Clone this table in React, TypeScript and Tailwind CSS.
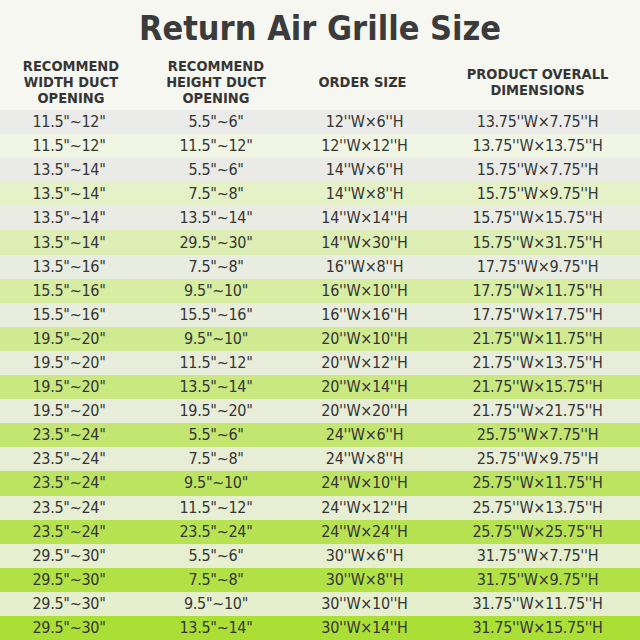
const rows: [string, string, string, string][] = [
  ['11.5"~12"', '5.5"~6"', "12''W×6''H", "13.75''W×7.75''H"],
  ['11.5"~12"', '11.5"~12"', "12''W×12''H", "13.75''W×13.75''H"],
  ['13.5"~14"', '5.5"~6"', "14''W×6''H", "15.75''W×7.75''H"],
  ['13.5"~14"', '7.5"~8"', "14''W×8''H", "15.75''W×9.75''H"],
  ['13.5"~14"', '13.5"~14"', "14''W×14''H", "15.75''W×15.75''H"],
  ['13.5"~14"', '29.5"~30"', "14''W×30''H", "15.75''W×31.75''H"],
  ['13.5"~16"', '7.5"~8"', "16''W×8''H", "17.75''W×9.75''H"],
  ['15.5"~16"', '9.5"~10"', "16''W×10''H", "17.75''W×11.75''H"],
  ['15.5"~16"', '15.5"~16"', "16''W×16''H", "17.75''W×17.75''H"],
  ['19.5"~20"', '9.5"~10"', "20''W×10''H", "21.75''W×11.75''H"],
  ['19.5"~20"', '11.5"~12"', "20''W×12''H", "21.75''W×13.75''H"],
  ['19.5"~20"', '13.5"~14"', "20''W×14''H", "21.75''W×15.75''H"],
  ['19.5"~20"', '19.5"~20"', "20''W×20''H", "21.75''W×21.75''H"],
  ['23.5"~24"', '5.5"~6"', "24''W×6''H", "25.75''W×7.75''H"],
  ['23.5"~24"', '7.5"~8"', "24''W×8''H", "25.75''W×9.75''H"],
  ['23.5"~24"', '9.5"~10"', "24''W×10''H", "25.75''W×11.75''H"],
  ['23.5"~24"', '11.5"~12"', "24''W×12''H", "25.75''W×13.75''H"],
  ['23.5"~24"', '23.5"~24"', "24''W×24''H", "25.75''W×25.75''H"],
  ['29.5"~30"', '5.5"~6"', "30''W×6''H", "31.75''W×7.75''H"],
  ['29.5"~30"', '7.5"~8"', "30''W×8''H", "31.75''W×9.75''H"],
  ['29.5"~30"', '9.5"~10"', "30''W×10''H", "31.75''W×11.75''H"],
  ['29.5"~30"', '13.5"~14"', "30''W×14''H", "31.75''W×15.75''H"],
];

const mix = (a: number[], b: number[], t: number) =>
  `rgb(${a.map((v, i) => Math.round(v + (b[i] - v) * t)).join(',')})`;

// green rows ramp up faster than the pale ones
const rowColor = (i: number) => {
  const t = Math.floor(i / 2) / 10;
  return i % 2 === 0
    ? mix([235, 235, 233], [229, 239, 205], t)
    : mix([240, 245, 228], [172, 223, 54], Math.pow(t, 0.8));
};

const cols = 'grid grid-cols-[142px_148px_145px_1fr]';

export default function App() {
  return (
    <div
      className="w-[640px] h-[640px] overflow-hidden bg-[#f7f7f1] text-[#353535]"
      style={{ fontFamily: '"DejaVu Sans Condensed", "Noto Sans", sans-serif' }}
    >
      <h1 className="h-[54px] pt-[2px] flex items-center justify-center text-[34px] font-bold text-[#3b3b3b]">
        Return Air Grille Size
      </h1>
      <div className={`${cols} h-[56px] items-center text-center text-[14.5px] leading-[16px] font-bold uppercase`}>
        <div>Recommend<br />Width Duct<br />Opening</div>
        <div>Recommend<br />Height Duct<br />Opening</div>
        <div>Order Size</div>
        <div>Product Overall<br />Dimensions</div>
      </div>
      {rows.map((r, i) => (
        <div
          key={i}
          className={`${cols} h-[24.1px] items-center text-center text-[16px] tracking-[-0.3px]`}
          style={{ backgroundColor: rowColor(i) }}
        >
          <div className="pr-1">{r[0]}</div>
          <div>{r[1]}</div>
          <div className="pl-1">{r[2]}</div>
          <div>{r[3]}</div>
        </div>
      ))}
    </div>
  );
}
